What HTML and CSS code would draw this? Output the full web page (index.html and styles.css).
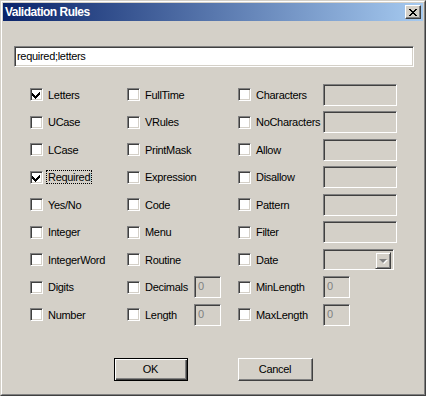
FILE: index.html
```html
<!DOCTYPE html>
<html lang="en">
<head>
    <meta charset="UTF-8">
    <title>Validation Rules</title>
    <link rel="stylesheet" href="styles.css">
</head>
<body>
    <div class="window">
        <div class="frame">
            <div class="titlebar">
                <span class="title">Validation Rules</span>
                <span class="close">
                    <svg width="8" height="7" viewBox="0 0 8 7"><path d="M0 0h2v1h1v1h2v-1h1v-1h2v1h-1v1h-1v1h-1v1h1v1h1v1h1v1h-2v-1h-1v-1h-2v1h-1v1h-2v-1h1v-1h1v-1h1v-1h-1v-1h-1v-1h-1z" fill="#000"/></svg>
                </span>
            </div>
            <div class="body">
                <div class="rule-input">required;letters</div>
                <div class="rules">
                    <div class="cell"><label class="check"><span class="box on"></span>Letters</label></div>
                    <div class="cell"><label class="check"><span class="box"></span>FullTime</label></div>
                    <div class="cell"><label class="check wide"><span class="box"></span>Characters</label><span class="field"></span></div>

                    <div class="cell"><label class="check"><span class="box"></span>UCase</label></div>
                    <div class="cell"><label class="check"><span class="box"></span>VRules</label></div>
                    <div class="cell"><label class="check wide"><span class="box"></span>NoCharacters</label><span class="field"></span></div>

                    <div class="cell"><label class="check"><span class="box"></span>LCase</label></div>
                    <div class="cell"><label class="check"><span class="box"></span>PrintMask</label></div>
                    <div class="cell"><label class="check wide"><span class="box"></span>Allow</label><span class="field"></span></div>

                    <div class="cell"><label class="check"><span class="box on"></span><span class="focus">Required</span></label></div>
                    <div class="cell"><label class="check"><span class="box"></span>Expression</label></div>
                    <div class="cell"><label class="check wide"><span class="box"></span>Disallow</label><span class="field"></span></div>

                    <div class="cell"><label class="check"><span class="box"></span>Yes/No</label></div>
                    <div class="cell"><label class="check"><span class="box"></span>Code</label></div>
                    <div class="cell"><label class="check wide"><span class="box"></span>Pattern</label><span class="field"></span></div>

                    <div class="cell"><label class="check"><span class="box"></span>Integer</label></div>
                    <div class="cell"><label class="check"><span class="box"></span>Menu</label></div>
                    <div class="cell"><label class="check wide"><span class="box"></span>Filter</label><span class="field"></span></div>

                    <div class="cell"><label class="check"><span class="box"></span>IntegerWord</label></div>
                    <div class="cell"><label class="check"><span class="box"></span>Routine</label></div>
                    <div class="cell"><label class="check wide"><span class="box"></span>Date</label><span class="combo"><span class="drop"><span class="arrow"></span></span></span></div>

                    <div class="cell"><label class="check"><span class="box"></span>Digits</label></div>
                    <div class="cell"><label class="check mid"><span class="box"></span>Decimals</label><span class="field small">0</span></div>
                    <div class="cell"><label class="check wide"><span class="box"></span>MinLength</label><span class="field small">0</span></div>

                    <div class="cell"><label class="check"><span class="box"></span>Number</label></div>
                    <div class="cell"><label class="check mid"><span class="box"></span>Length</label><span class="field small">0</span></div>
                    <div class="cell"><label class="check wide"><span class="box"></span>MaxLength</label><span class="field small">0</span></div>
                </div>
                <div class="buttons">
                    <span class="btn default">OK</span>
                    <span class="btn">Cancel</span>
                </div>
            </div>
        </div>
    </div>
</body>
</html>
```

FILE: styles.css
```css
* {
    margin: 0;
    padding: 0;
    box-sizing: border-box;
}
body {
    width: 426px;
    height: 396px;
    background: #d4d0c8;
    font-family: "Liberation Sans", Arial, sans-serif;
    font-size: 11px;
    letter-spacing: -0.3px;
    color: #000;
}
.window {
    width: 426px;
    height: 396px;
    border: 1px solid;
    border-color: #d4d0c8 #404040 #404040 #d4d0c8;
}
.frame {
    height: 100%;
    border: 1px solid;
    border-color: #fff #808080 #808080 #fff;
    padding: 1px;
    display: flex;
    flex-direction: column;
}
.titlebar {
    height: 18px;
    display: flex;
    align-items: center;
    justify-content: space-between;
    padding: 0 2px 0 2px;
    background: linear-gradient(to right, #0a246a, #a6caf0);
}
.title {
    color: #fff;
    font-weight: bold;
    font-size: 12px;
    letter-spacing: -0.5px;
}
.close {
    width: 16px;
    height: 14px;
    display: flex;
    align-items: center;
    justify-content: center;
    background: #d4d0c8;
    border: 1px solid;
    border-color: #fff #404040 #404040 #fff;
    box-shadow: inset -1px -1px #808080;
}
.body {
    flex: 1;
    display: flex;
    flex-direction: column;
}
.rule-input {
    width: 400px;
    height: 21px;
    margin: 25px 0 0 11px;
    padding: 3px 0 0 2px;
    background: #fff;
    border: 1px solid;
    border-color: #808080 #fff #fff #808080;
    box-shadow: inset 1px 1px #404040, inset -1px -1px #d4d0c8;
}
.rules {
    display: grid;
    grid-template-columns: 97px 111px 1fr;
    grid-auto-rows: 27.5px;
    margin-top: 14px;
    padding-left: 27px;
}
.cell {
    display: flex;
    align-items: center;
}
.check {
    display: flex;
    align-items: center;
    gap: 5px;
}
.check.mid {
    width: 67px;
}
.check.wide {
    width: 85px;
}
.box {
    width: 13px;
    height: 13px;
    flex: none;
    background: #fff;
    border: 1px solid;
    border-color: #808080 #fff #fff #808080;
    box-shadow: inset 1px 1px #404040, inset -1px -1px #d4d0c8;
}
.box.on {
    background: #fff url("data:image/svg+xml,%3Csvg xmlns='http://www.w3.org/2000/svg' width='11' height='11'%3E%3Cpath d='M8 3h1v3h-1v1h-1v1h-1v1h-1v1h-1v-1h-1v-1h-1v-1h-1v-3h1v1h1v1h1v1h1v-1h1v-1h1v-1h1z' fill='%23000'/%3E%3C/svg%3E") no-repeat 0 0;
}
.focus {
    outline: 1px dotted #000;
    outline-offset: 0;
    padding: 0 1px;
    margin-left: -1px;
}
.field {
    width: 74px;
    height: 22px;
    padding: 3px 0 0 3px;
    color: #808080;
    border: 1px solid;
    border-color: #808080 #fff #fff #808080;
    box-shadow: inset 1px 1px #404040, inset -1px -1px #d4d0c8;
}
.field.small {
    width: 27px;
}
.combo {
    width: 71px;
    height: 21px;
    display: flex;
    justify-content: flex-end;
    padding: 2px;
    border: 1px solid;
    border-color: #808080 #fff #fff #808080;
    box-shadow: inset 1px 1px #404040, inset -1px -1px #d4d0c8;
}
.drop {
    width: 16px;
    height: 17px;
    display: flex;
    align-items: center;
    justify-content: center;
    border: 1px solid;
    border-color: #d4d0c8 #404040 #404040 #d4d0c8;
    box-shadow: inset 1px 1px #fff, inset -1px -1px #808080;
}
.arrow {
    width: 0;
    height: 0;
    border-left: 4px solid transparent;
    border-right: 4px solid transparent;
    border-top: 4px solid #808080;
    filter: drop-shadow(1px 1px 0 #fff);
}
.buttons {
    display: flex;
    justify-content: center;
    gap: 50px;
    margin-top: 29px;
}
.btn {
    width: 75px;
    height: 23px;
    display: flex;
    align-items: center;
    justify-content: center;
    border: 1px solid;
    border-color: #fff #404040 #404040 #fff;
    box-shadow: inset -1px -1px #808080;
}
.btn.default {
    width: 74px;
    border-color: #000;
    box-shadow: inset 1px 1px #fff, inset -1px -1px #404040, inset -2px -2px #808080;
}
```
